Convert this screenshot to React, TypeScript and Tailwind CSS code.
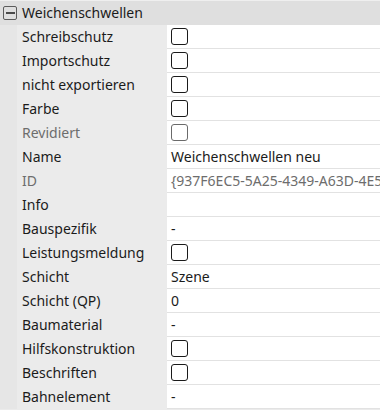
type Row = {
  label: string;
  kind: "check" | "text";
  value?: string;
  disabled?: boolean;
};

const rows: Row[] = [
  { label: "Schreibschutz", kind: "check" },
  { label: "Importschutz", kind: "check" },
  { label: "nicht exportieren", kind: "check" },
  { label: "Farbe", kind: "check" },
  { label: "Revidiert", kind: "check", disabled: true },
  { label: "Name", kind: "text", value: "Weichenschwellen neu" },
  { label: "ID", kind: "text", value: "{937F6EC5-5A25-4349-A63D-4E5B2C81F0A7}", disabled: true },
  { label: "Info", kind: "text", value: "" },
  { label: "Bauspezifik", kind: "text", value: "-" },
  { label: "Leistungsmeldung", kind: "check" },
  { label: "Schicht", kind: "text", value: "Szene" },
  { label: "Schicht (QP)", kind: "text", value: "0" },
  { label: "Baumaterial", kind: "text", value: "-" },
  { label: "Hilfskonstruktion", kind: "check" },
  { label: "Beschriften", kind: "check" },
  { label: "Bahnelement", kind: "text", value: "-" },
];

function CheckBox({ disabled }: { disabled?: boolean }) {
  return (
    <div
      className={
        disabled
          ? "h-[17px] w-[17px] rounded-[3px] border border-[#6a6a6a] bg-white"
          : "h-[17px] w-[17px] rounded-[3px] border border-[#1a1a1a] bg-white"
      }
    />
  );
}

export default function App() {
  return (
    <div
      className="h-[410px] w-[380px] overflow-hidden bg-[#ebebeb] text-[14px] leading-none text-[#1b1b1b]"
      style={{ fontFamily: '"Segoe UI", "Noto Sans", sans-serif' }}
    >
      {/* category header */}
      <div className="flex h-[25px] items-center border-t border-[#efefef] bg-[#dfdfdf]">
        <div className="ml-[3px] flex h-[14px] w-[14px] items-center justify-center rounded-[2px] border border-[#5c5c5c]">
          <div className="h-[2px] w-[9px] bg-[#4a4a4a]" />
        </div>
        <span className="ml-[5px] whitespace-nowrap">Weichenschwellen</span>
      </div>

      {/* property rows */}
      {rows.map((r) => (
        <div key={r.label} className="flex h-[24px]">
          <div className="w-[17px] shrink-0 bg-[#e6e6e6]" />
          <div
            className={
              r.disabled
                ? "flex w-[150px] shrink-0 items-center border-b border-[#ebebeb] pl-[5px] text-[#6d6d6d]"
                : "flex w-[150px] shrink-0 items-center border-b border-[#ebebeb] pl-[5px]"
            }
          >
            <span className="whitespace-nowrap">{r.label}</span>
          </div>
          <div className="flex min-w-0 flex-1 items-center overflow-hidden border-b border-[#e2e2e2] bg-white pl-[4px]">
            {r.kind === "check" ? (
              <CheckBox disabled={r.disabled} />
            ) : (
              <span
                className={
                  r.disabled
                    ? "whitespace-nowrap text-[#6d6d6d]"
                    : "whitespace-nowrap"
                }
              >
                {r.value}
              </span>
            )}
          </div>
        </div>
      ))}
    </div>
  );
}
